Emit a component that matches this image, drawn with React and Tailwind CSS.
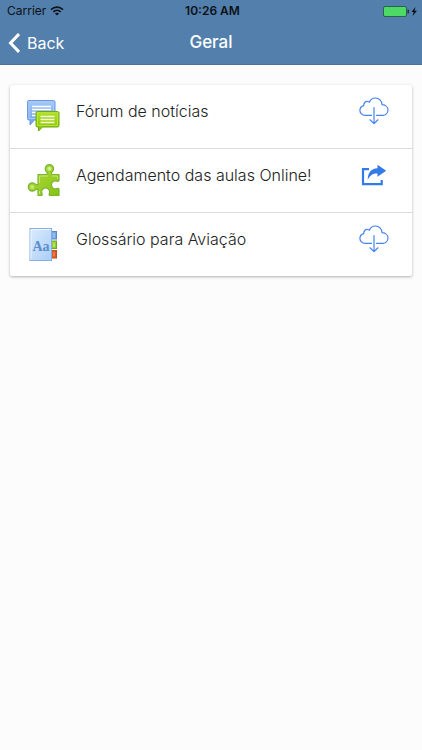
import React from "react";

const ForumIcon = () => (
  <svg viewBox="0 0 34 34" className="w-[34px] h-[34px]" aria-hidden="true">
    <defs>
      <linearGradient id="forumBlue" x1="0" y1="0" x2="0" y2="1">
        <stop offset="0" stopColor="#a5c8f7" />
        <stop offset="1" stopColor="#6f9fe8" />
      </linearGradient>
      <linearGradient id="forumGreen" x1="0" y1="0" x2="0" y2="1">
        <stop offset="0" stopColor="#b4e02a" />
        <stop offset="1" stopColor="#86c400" />
      </linearGradient>
    </defs>
    <path
      d="M3 1.5h24.5a1.5 1.5 0 0 1 1.5 1.5v16.5a1.5 1.5 0 0 1-1.5 1.5H8.5L4 26v-5H3a1.5 1.5 0 0 1-1.5-1.5V3A1.5 1.5 0 0 1 3 1.5z"
      fill="url(#forumBlue)"
      stroke="#6c98de"
    />
    <rect x="3" y="3" width="24.5" height="16.5" fill="none" stroke="#a9caf8" />
    <path d="M6 7.500h19M6 10.500h19M6 13.500h4M6 16.500h4" stroke="#fff" strokeWidth="1.400" />
    <path
      d="M11.500 12.500h20a1.500 1.500 0 0 1 1.500 1.500v12.500a1.500 1.500 0 0 1-1.500 1.500H16.500L12.500 32v-4h-1a1.500 1.500 0 0 1-1.500-1.500V14a1.500 1.500 0 0 1 1.500-1.500z"
      fill="url(#forumGreen)"
      stroke="#6da610"
    />
    <rect x="11.500" y="14" width="20" height="12.500" fill="none" stroke="#b9e53a" />
    <path d="M14.500 17.500h14M14.500 20.500h14M14.500 23.500h14" stroke="#f6ffe0" strokeWidth="1.400" />
  </svg>
);

const PUZZLE_PATH =
  "M12 11.500H20.500C21.600 11.200 21.600 9.800 20.600 8.900A4.200 4.200 0 1 1 26.200 8.900C25.200 9.800 25.200 11.200 26.300 11.500H33V17.600C32.500 18.800 31.600 18.400 30.800 18.100A4 4 0 1 0 30.800 25.600C31.600 25.200 32.500 25 33 26.100V32.500H23.700C22.800 32 23 31.200 23.300 30.500A4 4 0 1 0 16 30.500C16.300 31.200 16.500 32 15.700 32.500H12V27C11.700 25.900 10.400 25.900 9.500 26.900A4.200 4.200 0 1 1 9.500 21.100C10.400 22 11.700 22 12 21Z";

const PuzzleIcon = () => (
  <svg viewBox="0 0 34 34" className="w-[34px] h-[34px]" aria-hidden="true">
    <defs>
      <linearGradient id="puzzleGreen" x1="0" y1="0" x2="1" y2="1">
        <stop offset="0" stopColor="#b5dc4b" />
        <stop offset="1" stopColor="#86c40c" />
      </linearGradient>
    </defs>
    <path d={PUZZLE_PATH} fill="url(#puzzleGreen)" stroke="#7cb534" strokeWidth="1.200" strokeLinejoin="round" />
    <path d="M13.500 20V13h8.500M26 13h5.500v3M13.500 28v3" fill="none" stroke="#c4e86b" />
    <circle cx="23.400" cy="5.800" r="2" fill="#d3ef8e" />
    <circle cx="6.300" cy="24" r="2" fill="#c4e86b" />
  </svg>
);

const GlossaryIcon = () => (
  <svg viewBox="0 0 34 34" className="w-[34px] h-[34px]" aria-hidden="true">
    <defs>
      <linearGradient id="glossaryPage" x1="0" y1="0" x2="1" y2="1">
        <stop offset="0" stopColor="#dcecfd" />
        <stop offset="1" stopColor="#a9cef7" />
      </linearGradient>
    </defs>
    <rect x="23.500" y="4.500" width="7" height="7.500" fill="#79a7e6" stroke="#5c88c9" />
    <rect x="23.500" y="14" width="7" height="7.500" fill="#8fce2c" stroke="#70a52a" />
    <rect x="23.500" y="23.500" width="7" height="7.500" fill="#e2561f" stroke="#b9532c" />
    <path d="M28 6v4.500" stroke="#b4d2f8" />
    <path d="M28 15.500v4.500" stroke="#d5f19a" />
    <path d="M28 25v4.500" stroke="#f5a070" />
    <rect x="4" y="1.500" width="21.500" height="32" fill="url(#glossaryPage)" stroke="#86aee2" />
    <path d="M5 32.500v-30H24.500" fill="none" stroke="#eef6ff" />
    <text
      x="15"
      y="23.500"
      textAnchor="middle"
      fontFamily="'Liberation Serif', serif"
      fontWeight="700"
      fontSize="14"
      fill="#5b8dcb"
    >
      Aa
    </text>
  </svg>
);

const CloudDownloadIcon = () => (
  <svg
    viewBox="0 0 30 28"
    className="w-[30px] h-[28px]"
    fill="none"
    stroke="#4383ee"
    strokeWidth="1.200"
    strokeLinecap="round"
    strokeLinejoin="round"
    aria-hidden="true"
  >
    <path d="M12.500 18.300H6.300C3.200 18.300 0.900 16.100 0.900 13.500C0.900 10.900 2.600 9.100 4.800 8.600C4.400 6 6.400 4.200 8.600 4.500C9.300 4.600 9.900 4.800 10.400 5.200C11.400 2.500 13.600 1 16.300 1C20 1 22.900 3.800 23.100 7.700C26.600 7.900 29 10.200 29 13C29 16 26.700 18.300 23.600 18.300H17.500" />
    <path d="M15 10.500V26.500M11 22.800L15 26.600L19 22.800" />
  </svg>
);

const ShareIcon = () => (
  <svg viewBox="0 0 26 22" className="w-[26px] h-[22px]" aria-hidden="true">
    <path d="M8 5.200H2V20.200H20.700V16" fill="none" stroke="#347bea" strokeWidth="2.200" />
    <path d="M16.500 0.800L25.200 6.800L16.500 12.800V9.400C12 9.200 9 11 6.800 15.800C6.600 9 10 4.500 16.500 4.200Z" fill="#347bea" />
  </svg>
);

const WifiIcon = () => (
  <svg viewBox="0 0 14 10" className="w-3.5 h-2.5" fill="none" stroke="#0d1218" strokeWidth="1.600" aria-hidden="true">
    <path d="M1 3.600C4.400 0.300 9.600 0.300 13 3.600" />
    <path d="M3.300 5.900C5.400 3.900 8.600 3.900 10.700 5.900" />
    <path d="M4.900 7.400C6.100 6.400 7.900 6.400 9.100 7.400L7 9.500Z" fill="#0d1218" stroke="none" />
  </svg>
);

const BatteryIcon = () => (
  <svg viewBox="0 0 35 11" className="w-[35px] h-[11px]" aria-hidden="true">
    <rect x="0.500" y="0.500" width="23" height="10" rx="1.500" fill="#4cd964" stroke="#28634f" />
    <path d="M24.500 3.500h0.500a1 1 0 0 1 1 1v2a1 1 0 0 1-1 1h-0.500z" fill="#1d2f3f" />
    <path d="M32.500 1L28.500 6h2.200L29.500 10L34 4.800h-2.400z" fill="#0d1218" />
  </svg>
);

const items = [
  { id: 1, title: "Fórum de notícias", icon: ForumIcon, action: CloudDownloadIcon, label: "Download" },
  { id: 2, title: "Agendamento das aulas Online!", icon: PuzzleIcon, action: ShareIcon, label: "Abrir" },
  { id: 3, title: "Glossário para Aviação", icon: GlossaryIcon, action: CloudDownloadIcon, label: "Download" },
];

const App = () => {
  return (
    <div className="min-h-screen bg-[#fcfcfc] font-['Inter',sans-serif]">
      <header className="bg-[#527fac] border-b border-[#4a749e]">
        {/* Status bar */}
        <div className="grid grid-cols-3 items-center h-[22px] pl-[7px] pr-1 text-xs text-[#0d1218]">
          <div className="flex items-center gap-1">
            <span>Carrier</span>
            <WifiIcon />
          </div>
          <span className="text-center font-semibold">10:26 AM</span>
          <div className="flex justify-end">
            <BatteryIcon />
          </div>
        </div>

        {/* Navigation bar */}
        <div className="grid grid-cols-3 items-center h-[42px] px-2 text-white">
          <button type="button" className="flex items-center gap-[7px] text-base cursor-pointer">
            <svg viewBox="0 0 12 20" className="w-3 h-5" fill="none" stroke="#fff" strokeWidth="3" aria-hidden="true">
              <path d="M11 1L2.500 10L11 19" />
            </svg>
            Back
          </button>
          <h1 className="text-center text-[17px] font-medium">Geral</h1>
        </div>
      </header>

      <main className="px-2.5 pt-5">
        <ul className="bg-white rounded-xs shadow-[0_1px_3px_rgba(0,0,0,0.3)] divide-y divide-[#dcdcdc]">
          {items.map(({ id, title, icon: Icon, action: Action, label }) => (
            <li key={id} className="flex items-start h-16 last:h-[63px] pl-4 pr-[18px]">
              <div className="pt-3.5">
                <Icon />
              </div>
              <a href="#" className="flex-1 pl-4 pt-3.5 text-base leading-6 font-light text-[#222]">
                {title}
              </a>
              <button
                type="button"
                aria-label={label}
                className="flex items-center justify-center w-10 h-[52px] cursor-pointer"
              >
                <Action />
              </button>
            </li>
          ))}
        </ul>
      </main>
    </div>
  );
};

export default App;
